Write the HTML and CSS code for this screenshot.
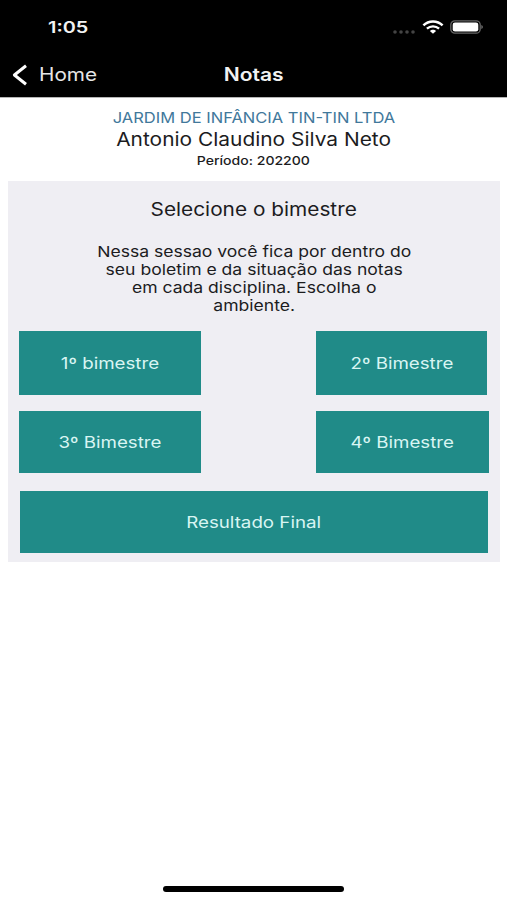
FILE: index.html
```html
<!DOCTYPE html>
<html lang="pt-BR">
<head>
    <meta charset="UTF-8">
    <meta name="viewport" content="width=device-width, initial-scale=1.0">
    <link rel="stylesheet" href="styles.css">
    <title>Notas</title>
</head>
<body>
    <header class="top">
        <div class="status-bar">
            <span class="time wide">1:05</span>
            <div class="status-icons">
                <svg class="dots" width="24" height="4" viewBox="0 0 24 4" fill="#444">
                    <circle cx="3" cy="2" r="1.8"/>
                    <circle cx="9" cy="2" r="1.8"/>
                    <circle cx="15" cy="2" r="1.8"/>
                    <circle cx="21" cy="2" r="1.8"/>
                </svg>
                <svg class="wifi" width="22" height="14" viewBox="0 0 22 14">
                    <path d="M1.4 5.3C6.6 0.1 15.4 0.1 20.6 5.3" fill="none" stroke="#fff" stroke-width="2.5"/>
                    <path d="M4.9 8.7C8.4 5.5 13.6 5.5 17.1 8.7" fill="none" stroke="#fff" stroke-width="2.3"/>
                    <path d="M7.9 11C9.6 9.2 12.4 9.2 14.1 11L11 13.8Z" fill="#fff"/>
                </svg>
                <svg class="battery" width="34" height="14" viewBox="0 0 34 14">
                    <rect x="0.8" y="0.8" width="29.4" height="12.4" rx="4" fill="none" stroke="#666" stroke-width="1.3"/>
                    <rect x="2.7" y="2.5" width="25.6" height="9" rx="2.3" fill="#fff"/>
                    <path d="M31.4 5C33.3 5.7 33.3 8.3 31.4 9Z" fill="#777"/>
                </svg>
            </div>
        </div>
        <nav class="nav-bar">
            <a class="back" href="#">
                <svg width="16" height="22" viewBox="0 0 16 22">
                    <path d="M14 1.8L2.4 11L14 20.2" fill="none" stroke="#fff" stroke-width="3" stroke-linejoin="round"/>
                </svg>
                <span class="wide">Home</span>
            </a>
            <h1 class="wide">Notas</h1>
        </nav>
    </header>

    <section class="student">
        <p class="school wide">JARDIM DE INFÂNCIA TIN-TIN LTDA</p>
        <p class="name wide">Antonio Claudino Silva Neto</p>
        <p class="period wide">Período: 202200</p>
    </section>

    <main class="panel">
        <h2 class="wide">Selecione o bimestre</h2>
        <p class="info wide">Nessa sessao você fica por dentro do<br>seu boletim e da situação das notas<br>em cada disciplina. Escolha o<br>ambiente.</p>
        <div class="row first">
            <button><span class="wide">1º bimestre</span></button>
            <button><span class="wide">2º Bimestre</span></button>
        </div>
        <div class="row second">
            <button><span class="wide">3º Bimestre</span></button>
            <button><span class="wide">4º Bimestre</span></button>
        </div>
        <button class="final"><span class="wide">Resultado Final</span></button>
    </main>

    <div class="home-indicator"></div>
</body>
</html>
```
FILE: styles.css
```css
* {
    box-sizing: border-box;
}

body {
    margin: 0;
    height: 900px;
    display: flex;
    flex-direction: column;
    overflow: hidden;
    background: #fff;
    color: #1c1c1e;
    font-family: Inter, "Liberation Sans", sans-serif;
}

h1, h2, p {
    margin: 0;
    font-weight: 400;
    white-space: nowrap;
}

/* wide letterforms */
.wide {
    display: block;
    width: fit-content;
    transform: scaleX(1.17);
}

.top {
    height: 98px;
    background: #000;
    color: #f2f2f2;
    border-bottom: 1px solid #b5b5b5;
}

.status-bar {
    display: flex;
    justify-content: space-between;
    height: 52px;
    padding: 17px 23px 0 48px;
}

.time {
    font-size: 16px;
    line-height: 20px;
    font-weight: 600;
    transform: scaleX(1.24);
    transform-origin: left;
}

.status-icons {
    display: flex;
    height: 20px;
    align-items: center;
}

.dots {
    margin: 9px 6px 0 0;
}

.wifi {
    margin-right: 6px;
}

.nav-bar {
    display: grid;
    grid-template-columns: 1fr auto 1fr;
    align-items: center;
    height: 45px;
}

.back {
    display: flex;
    align-items: center;
    gap: 11px;
    padding-left: 12px;
    color: #e6e6e6;
    font-size: 18px;
    text-decoration: none;
}

.back .wide {
    transform: scaleX(1.15);
    transform-origin: left;
}

.nav-bar h1 {
    font-size: 18px;
    font-weight: 600;
}

.student {
    display: flex;
    flex-direction: column;
    align-items: center;
    height: 83px;
    padding-top: 10px;
}

.school {
    font-size: 14.5px;
    line-height: 20px;
    color: #41789b;
    transform: scaleX(1.14);
}

.name {
    font-size: 18.5px;
    line-height: 23px;
    transform: scaleX(1.13);
}

.period {
    font-size: 12px;
    line-height: 20px;
    font-weight: 500;
}

.panel {
    height: 381px;
    margin: 0 7px 0 8px;
    background: #efeef3;
    text-align: center;
}

.panel h2 {
    margin: 0 auto;
    padding-top: 16px;
    font-size: 18.5px;
    line-height: 24px;
    transform: scaleX(1.125);
}

.info {
    margin: 22px auto 16px;
    font-size: 15px;
    line-height: 18px;
}

.row {
    display: grid;
    grid-template-columns: 182px 171px;
    justify-content: start;
    column-gap: 115px;
    margin-left: 11px;
}

.first {
    height: 64px;
    margin-bottom: 16px;
}

.second {
    grid-template-columns: 182px 173px;
    height: 62px;
    margin-bottom: 18px;
}

button {
    padding: 0;
    border: 0;
    background: #208b88;
    color: #d9f5f3;
    font-family: inherit;
    font-size: 16px;
}

button .wide {
    margin: 0 auto;
}

.final {
    display: block;
    width: 468px;
    height: 62px;
    margin-left: 12px;
}

.home-indicator {
    width: 181px;
    height: 6px;
    margin: auto auto 8px;
    border-radius: 3px;
    background: #000;
}
```
